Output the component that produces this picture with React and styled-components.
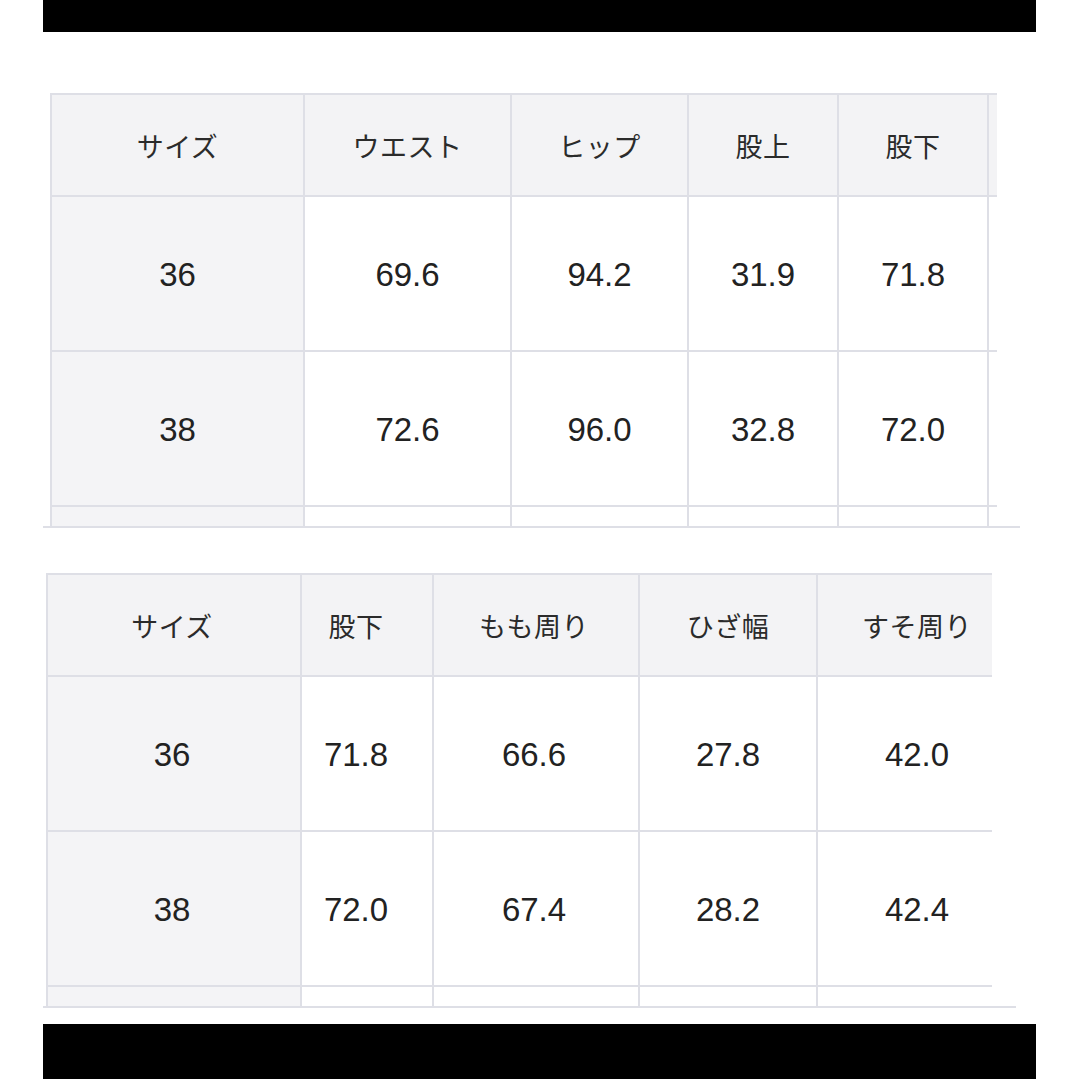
import styled, { createGlobalStyle } from "styled-components";

const GlobalStyle = createGlobalStyle`
  html, body {
    margin: 0;
    padding: 0;
    background: #ffffff;
  }

  body {
    font-family: "Liberation Sans", "Noto Sans CJK JP", sans-serif;
    color: #222222;
  }
`;

const lineColor = "#dedfe6";

const tables = [
  {
    inset: 7,
    width: 947,
    sectionWidth: 977,
    gapTop: 61,
    cols: [253, 207, 177, 150, 150, 150],
    pads: [0, 0, 0, 0, 0, 0],
    head: ["サイズ", "ウエスト", "ヒップ", "股上", "股下", ""],
    rows: [
      ["36", "69.6", "94.2", "31.9", "71.8", ""],
      ["38", "72.6", "96.0", "32.8", "72.0", ""],
      ["", "", "", "", "", ""],
    ],
  },
  {
    inset: 3,
    width: 946,
    sectionWidth: 973,
    gapTop: 45,
    cols: [254, 132, 206, 178, 200],
    pads: [4, 22, 4, 0, 0],
    head: ["サイズ", "股下", "もも周り", "ひざ幅", "すそ周り"],
    rows: [
      ["36", "71.8", "66.6", "27.8", "42.0"],
      ["38", "72.0", "67.4", "28.2", "42.4"],
      ["", "", "", "", ""],
    ],
  },
];

const Page = styled.div`
  display: flex;
  flex-direction: column;
  padding-left: 43px;
  width: 1080px;
  height: 1080px;
  box-sizing: border-box;
  overflow: hidden;
`;

const BlackBar = styled.div`
  width: 993px;
  height: ${(p) => p.$h}px;
  margin-top: ${(p) => p.$top || 0}px;
  background: #000000;
  flex-shrink: 0;
`;

const Section = styled.div`
  width: ${(p) => p.$w}px;
  margin-top: ${(p) => p.$top}px;
  border-bottom: 2px solid ${lineColor};
  flex-shrink: 0;
`;

const Viewport = styled.div`
  margin-left: ${(p) => p.$inset}px;
  width: ${(p) => p.$w}px;
  height: 433px;
  overflow: hidden;
`;

const Table = styled.table`
  width: ${(p) => p.$w}px;
  border-collapse: separate;
  border-spacing: 0;
  table-layout: fixed;
  border-top: 2px solid ${lineColor};
  border-left: 2px solid ${lineColor};
`;

const HeadCell = styled.th`
  box-sizing: border-box;
  height: 102px;
  padding: 0 ${(p) => p.$pad}px 0 0;
  background: #f3f3f5;
  border-right: 2px solid ${lineColor};
  border-bottom: 2px solid ${lineColor};
  font-family: "Noto Sans CJK JP", "Liberation Sans", sans-serif;
  font-weight: 400;
  font-size: 27px;
  letter-spacing: 0.5px;
  color: #2b2b2b;
  text-align: center;
  vertical-align: middle;
  white-space: nowrap;
`;

const Cell = styled.td`
  box-sizing: border-box;
  height: 155px;
  padding: 2px ${(p) => p.$pad}px 0 0;
  background: ${(p) => (p.$label ? "#f4f4f6" : "#ffffff")};
  border-right: 2px solid ${lineColor};
  border-bottom: 2px solid ${lineColor};
  font-family: "Liberation Sans", Arial, sans-serif;
  font-size: 33px;
  color: #222222;
  text-align: center;
  vertical-align: middle;
`;

const SizeTable = ({ data }) => {
  const total = data.cols.reduce((a, b) => a + b, 0) + 2;

  return (
    <Section $w={data.sectionWidth} $top={data.gapTop}>
      <Viewport $inset={data.inset} $w={data.width}>
        <Table $w={total}>
          <colgroup>
            {data.cols.map((w, i) => (
              <col key={i} style={{ width: w }} />
            ))}
          </colgroup>
          <thead>
            <tr>
              {data.head.map((h, i) => (
                <HeadCell key={i} $pad={data.pads[i]}>
                  {h}
                </HeadCell>
              ))}
            </tr>
          </thead>
          <tbody>
            {data.rows.map((row, r) => (
              <tr key={r}>
                {row.map((v, i) => (
                  <Cell key={i} $label={i === 0} $pad={data.pads[i]}>
                    {v}
                  </Cell>
                ))}
              </tr>
            ))}
          </tbody>
        </Table>
      </Viewport>
    </Section>
  );
};

export default function App() {
  return (
    <>
      <GlobalStyle />
      <Page>
        <BlackBar $h={32} />
        {tables.map((t, i) => (
          <SizeTable key={i} data={t} />
        ))}
        <BlackBar $h={55} $top={16} />
      </Page>
    </>
  );
}
